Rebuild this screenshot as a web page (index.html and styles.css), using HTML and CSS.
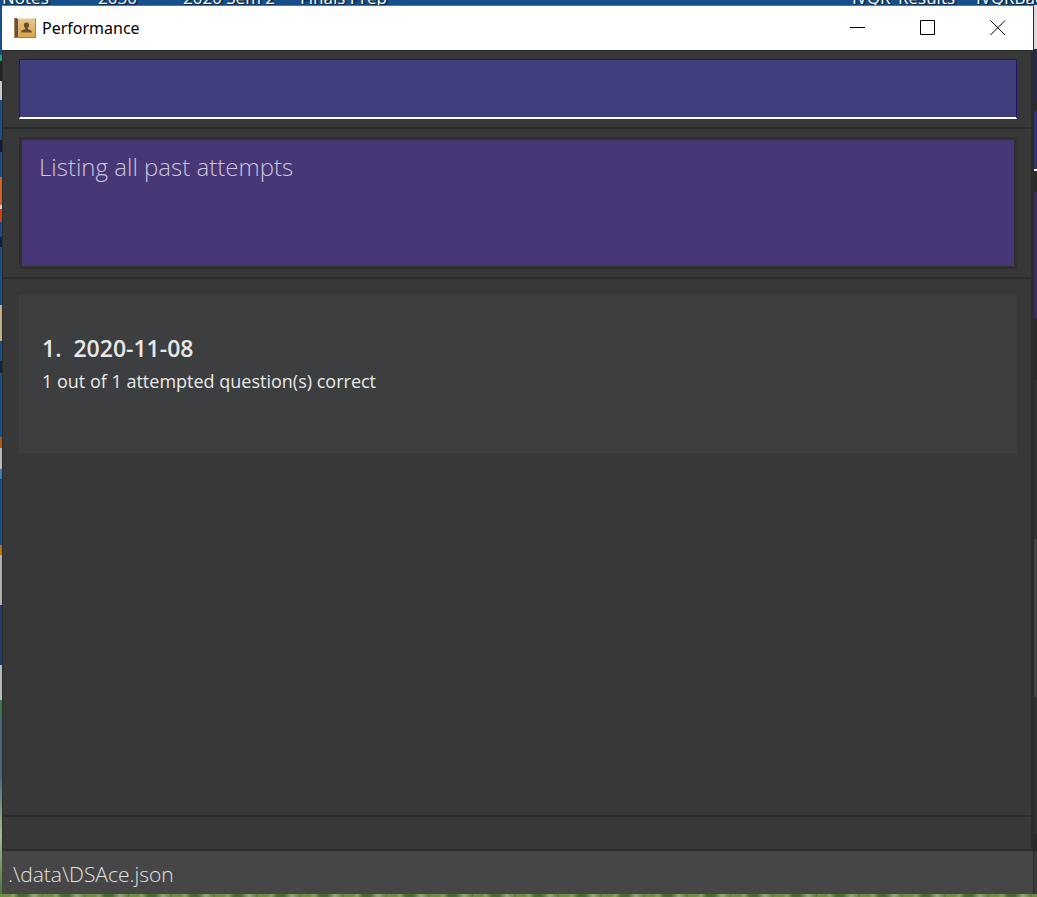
FILE: index.html
```
<!DOCTYPE html>
<html lang="en">
<head>
<meta charset="utf-8">
<title>Performance</title>
<link rel="stylesheet" href="styles.css">
</head>
<body class="desktop">
  <div class="desktop-top">
    <span class="shortcut shortcut-notes">Notes</span>
    <span class="shortcut shortcut-module">2030</span>
    <span class="shortcut shortcut-sem">2020 Sem 2</span>
    <span class="shortcut shortcut-finals">Finals Prep</span>
    <span class="shortcut shortcut-results">IVQR_Results</span>
    <span class="shortcut shortcut-backup">IVQRBackup</span>
  </div>
  <div class="desktop-left"></div>
  <main class="window">
    <header class="titlebar">
      <svg class="app-icon" viewBox="0 0 22 22" aria-hidden="true">
        <defs>
          <linearGradient id="cover" x1="0" y1="0" x2="0" y2="1">
            <stop offset="0" stop-color="#e6c68c"/>
            <stop offset="1" stop-color="#dda544"/>
          </linearGradient>
        </defs>
        <rect x="0" y="1" width="22" height="20" rx="1" fill="#a98555"/>
        <rect x="1" y="1" width="3" height="19" fill="#65524a"/>
        <rect x="4" y="2" width="17" height="18" fill="url(#cover)"/>
        <path d="M3 1.500H21" stroke="#f1e4d0"/>
        <path d="M0 20.500H22" stroke="#987b50"/>
        <path d="M12.500 5.500c-2 0-2.800 1.200-2.600 3 .1 1.300.7 2 1.300 2.600v1.200c-2.400.5-4 1-4.200 3.200h11c-.2-2.200-1.800-2.700-4.200-3.200v-1.200c.6-.6 1.200-1.300 1.300-2.600.2-1.800-.6-3-2.600-3z" fill="#65502f"/>
      </svg>
      <h1 class="window-title">Performance</h1>
      <div class="window-controls">
        <button class="control" type="button" aria-label="Minimize">
          <svg viewBox="0 0 16 16" class="control-icon"><path d="M0 7.500H15"/></svg>
        </button>
        <button class="control" type="button" aria-label="Maximize">
          <svg viewBox="0 0 16 16" class="control-icon"><path d="M.5.500H14.500V14.500H.5Z"/></svg>
        </button>
        <button class="control" type="button" aria-label="Close">
          <svg viewBox="0 0 16 16" class="control-icon"><path d="M.5.500 15 15M15 .5.500 15"/></svg>
        </button>
      </div>
    </header>
    <section class="pane command-pane">
      <input class="command" type="text" aria-label="Command">
    </section>
    <section class="pane result-pane">
      <textarea class="result" readonly aria-label="Result">Listing all past attempts</textarea>
    </section>
    <section class="pane list-pane">
      <article class="attempt">
        <h2 class="attempt-title"><span>1.</span><span>2020-11-08</span></h2>
        <p class="attempt-score">1 out of 1 attempted question(s) correct</p>
      </article>
    </section>
    <div class="pane spare-pane"></div>
    <footer class="statusbar">.\data\DSAce.json</footer>
  </main>
  <div class="desktop-right"></div>
  <div class="desktop-bottom"></div>
</body>
</html>
```
FILE: styles.css
```
* {
  box-sizing: border-box;
}

.desktop {
  margin: 0;
  min-height: 100vh;
  display: grid;
  grid-template-columns: 2px 1fr 3px;
  grid-template-rows: 5px 1fr 3px;
  background: #164f8c;
  font-family: "Open Sans", "Noto Sans", sans-serif;
}

.desktop-top {
  grid-column: 1 / -1;
  position: relative;
  overflow: hidden;
  background: #164f8c;
}

.shortcut {
  position: absolute;
  bottom: -3px;
  color: #ffffff;
  font-size: 17px;
  line-height: 20px;
  white-space: nowrap;
  text-shadow: 1px 1px 2px #000000;
}

.shortcut-notes { left: 2px; }
.shortcut-module { left: 98px; }
.shortcut-sem { left: 183px; }
.shortcut-finals { left: 300px; }
.shortcut-results { left: 852px; }
.shortcut-backup { left: 976px; }

.desktop-left {
  background: linear-gradient(
    #164f8c 50px, #18a878 50px 56px, #222222 56px 76px, #c8c8c8 76px 95px,
    #164f8c 95px 135px, #0b1f38 135px 147px, #164f8c 147px 172px,
    #d2622a 172px 200px, #d0d0d0 200px 204px, #cf4216 204px 217px,
    #164f8c 217px 232px, #0b1f38 232px 242px, #164f8c 242px 300px,
    #c0b183 300px 336px, #164f8c 336px 356px, #10233c 356px 368px,
    #164f8c 368px 432px, #b85a08 432px 443px, #b8b8b8 443px 464px,
    #3b80b5 464px 474px, #164f8c 474px 540px, #c07000 540px 550px,
    #b0b0b0 550px 600px, #1c3f72 600px 660px, #b8b8b8 660px 695px,
    #367c49 695px 710px, #45687e 710px 770px, #a8bd8b 830px, #477539);
}

.window {
  display: flex;
  flex-direction: column;
  border-top: 1px solid #707070;
  border-right: 1px solid #2a2a2a;
  background: #383838;
}

.titlebar {
  display: flex;
  align-items: center;
  height: 44px;
  padding-left: 12px;
  gap: 6px;
  background: #ffffff;
}

.app-icon {
  width: 22px;
  height: 22px;
}

.window-title {
  margin: 0;
  flex: 1;
  color: #000000;
  font-family: "Noto Sans", sans-serif;
  font-size: 16px;
  font-weight: 400;
  line-height: 24px;
}

.window-controls {
  display: flex;
  height: 100%;
}

.control {
  width: 70px;
  padding: 0;
  border: 0;
  background: transparent;
}

.control-icon {
  display: block;
  width: 16px;
  height: 16px;
  margin: 0 auto;
  fill: none;
  stroke: #000000;
}

.pane {
  padding: 8px 14px 8px 16px;
  border: solid #2c2c2c;
  border-width: 0 2px 2px 1px;
}

.command-pane {
  border-top-width: 1px;
}

.command {
  display: block;
  width: 100%;
  height: 60px;
  padding: 8px 16px;
  border: 1px solid #1e1963;
  border-bottom: 2px solid #ffffff;
  border-radius: 0;
  background: #3e3f7c;
  color: #ffffff;
  font: 300 24px/32px "Open Sans", sans-serif;
  outline: 0;
}

.result {
  display: block;
  width: 100%;
  height: 132px;
  padding: 10px 17px;
  border: 3px solid #2f2f2f;
  border-radius: 0;
  background: #483777;
  color: #cbc6da;
  font: 300 24px/34px "Open Sans", sans-serif;
  resize: none;
  outline: 0;
}

.list-pane {
  flex: 1;
  padding-top: 16px;
}

.attempt {
  min-height: 158px;
  padding: 36px 23px;
  background: #3c3e3f;
  color: #e8e8e8;
}

.attempt-title {
  display: flex;
  gap: 12px;
  margin: 0;
  font-size: 23px;
  font-weight: 600;
  line-height: 34px;
}

.attempt-score {
  margin: 0;
  font-size: 18px;
  line-height: 32px;
}

.spare-pane {
  height: 34px;
}

.statusbar {
  height: 43px;
  padding: 0 6px;
  background: #464646;
  color: #e0e0e0;
  font-size: 21px;
  font-weight: 300;
  line-height: 46px;
}

.desktop-right {
  background: linear-gradient(
    #dcd9d8 44px, #29264f 44px 97px, #2b2b2b 97px 106px, #35356a 106px 164px,
    #ffffff 164px 166px, #2a2a2a 166px 187px, #3b2d62 187px 313px,
    #2a2a2a 313px 375px, #303332 375px 534px, #424446 534px 692px,
    #303332 692px 829px, #292929 829px 846px, #3c3c3c 846px);
}

.desktop-bottom {
  grid-column: 1 / -1;
  background: repeating-linear-gradient(90deg,
    #6d8c43 0 9px, #8ba260 13px, #48692f 19px 26px, #96a878 34px, #5b7938 43px);
}
```
